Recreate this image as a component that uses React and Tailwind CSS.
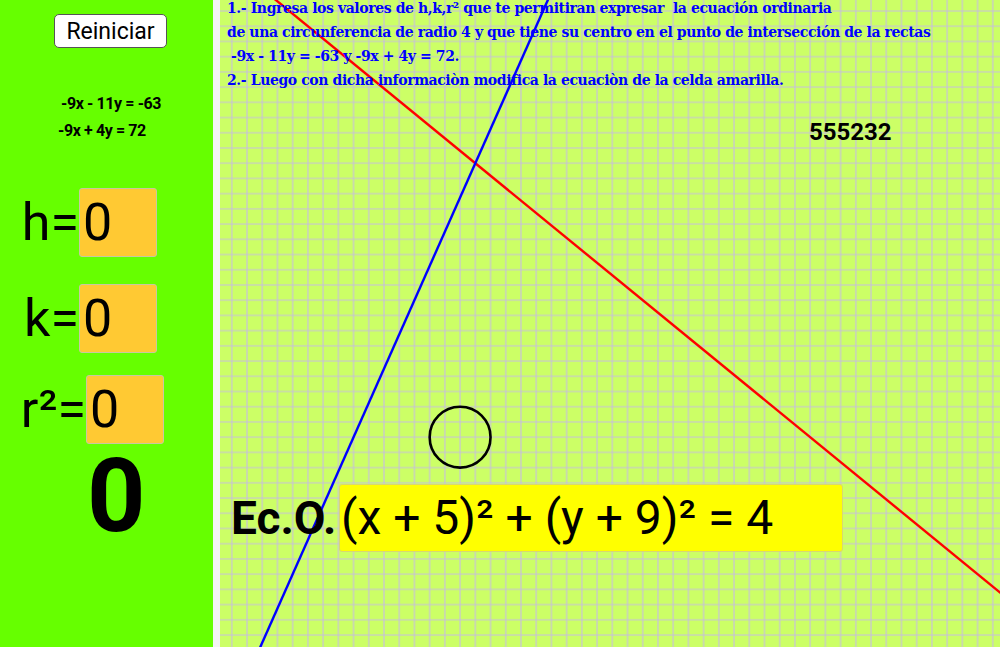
import React from 'react';

const S = 15.22;
const OX = 316.2;
const OY = 300.2;
const sx = (x) => OX + S * x;
const sy = (y) => OY - S * y;

const Campo = ({ label, labelW, top }) => (
    <div className="flex items-center" style={{ marginTop: top }}>
        <div className="text-[52px] leading-none text-black text-right" style={{ width: labelW }}>
            {label}
        </div>
        <div className="w-[78px] h-[69px] bg-[#ffc933] border border-[#c8c8a0] rounded-[3px] flex items-center pl-[3px] text-[52px] leading-none text-black">
            0
        </div>
    </div>
);

const Lienzo = () => {
    const red = (x) => (63 - 9 * x) / 11;
    const blue = (x) => (72 + 9 * x) / 4;
    return (
        <svg className="absolute inset-0" width="780" height="647" viewBox="0 0 780 647">
            <defs>
                <pattern id="cuadro" width={S} height={S} patternUnits="userSpaceOnUse" x={11.8 - S / 2} y={11 - S / 2}>
                    <path d={`M0 ${S / 2} H${S} M${S / 2} 0 V${S}`} stroke="#c6bde0" strokeWidth="1.1" fill="none" />
                </pattern>
            </defs>
            <rect width="780" height="647" fill="#ccff66" />
            <rect width="780" height="647" fill="url(#cuadro)" />
            <line x1={sx(-30)} y1={sy(red(-30))} x2={sx(50)} y2={sy(red(50))} stroke="#ff0000" strokeWidth="2.4" />
            <line x1={sx(-30)} y1={sy(blue(-30))} x2={sx(10)} y2={sy(blue(10))} stroke="#0000ff" strokeWidth="2.4" />
            <circle cx={sx(-5)} cy={sy(-9)} r={2 * S} fill="none" stroke="#000" strokeWidth="2.6" />
        </svg>
    );
};

const App = () => {
    return (
        <div className="flex w-[1000px] h-[647px] overflow-hidden" style={{ fontFamily: 'Roboto, "Liberation Sans", sans-serif' }}>
            {/* panel izquierdo */}
            <div className="w-[213px] h-full bg-[#66ff00] flex flex-col">
                <button className="mt-[14px] ml-[54px] w-[113px] h-[34px] bg-white border border-[#555] rounded-[5px] text-[23px] leading-none text-black">
                    Reiniciar
                </button>
                <div className="mt-[48px] ml-[61px] text-[16px] leading-[16px] font-bold tracking-[-0.4px] text-black">-9x - 11y = -63</div>
                <div className="mt-[11px] ml-[58px] text-[16px] leading-[16px] font-bold tracking-[-0.4px] text-black">-9x + 4y = 72</div>
                <Campo label="h=" labelW={79} top={49} />
                <Campo label="k=" labelW={79} top={27} />
                <Campo label="r²=" labelW={86} top={22} />
                <div className="ml-[87px] mt-[1px] text-[102px] leading-none font-bold text-black">0</div>
            </div>

            <div className="w-[7px] h-full bg-[#f4f4f4]" />

            {/* vista gráfica */}
            <div className="relative flex-1 h-full overflow-hidden">
                <Lienzo />
                <div
                    className="relative -mt-[4px] pl-[7px] text-[14px] leading-[24px] font-bold tracking-[-0.4px] text-[#0000ff] whitespace-pre"
                    style={{ fontFamily: '"DejaVu Serif", serif' }}
                >
                    <div>1.- Ingresa los valores de h,k,r² que te permitiran expresar  la ecuación ordinaria</div>
                    <div>de una circunferencia de radio 4 y que tiene su centro en el punto de intersección de la rectas</div>
                    <div className="pl-[4px]">-9x - 11y = -63 y -9x + 4y = 72.</div>
                    <div>2.- Luego con dicha informaciòn modifica la ecuaciòn de la celda amarilla.</div>
                </div>

                <div className="absolute left-[589px] top-[118px] text-[24px] leading-[28px] font-bold text-black">555232</div>

                <div className="absolute left-[11px] top-[484px] flex items-center">
                    <div className="w-[108px] text-[46px] leading-none font-bold text-black">Ec.O.</div>
                    <div className="w-[504px] h-[68px] bg-[#ffff00] border border-[#d8d870] rounded-[3px] flex items-center pl-[1px] text-[48px] leading-none text-black whitespace-pre">
                        (x + 5)² + (y + 9)² = 4
                    </div>
                </div>
            </div>
        </div>
    );
};

export default App;
